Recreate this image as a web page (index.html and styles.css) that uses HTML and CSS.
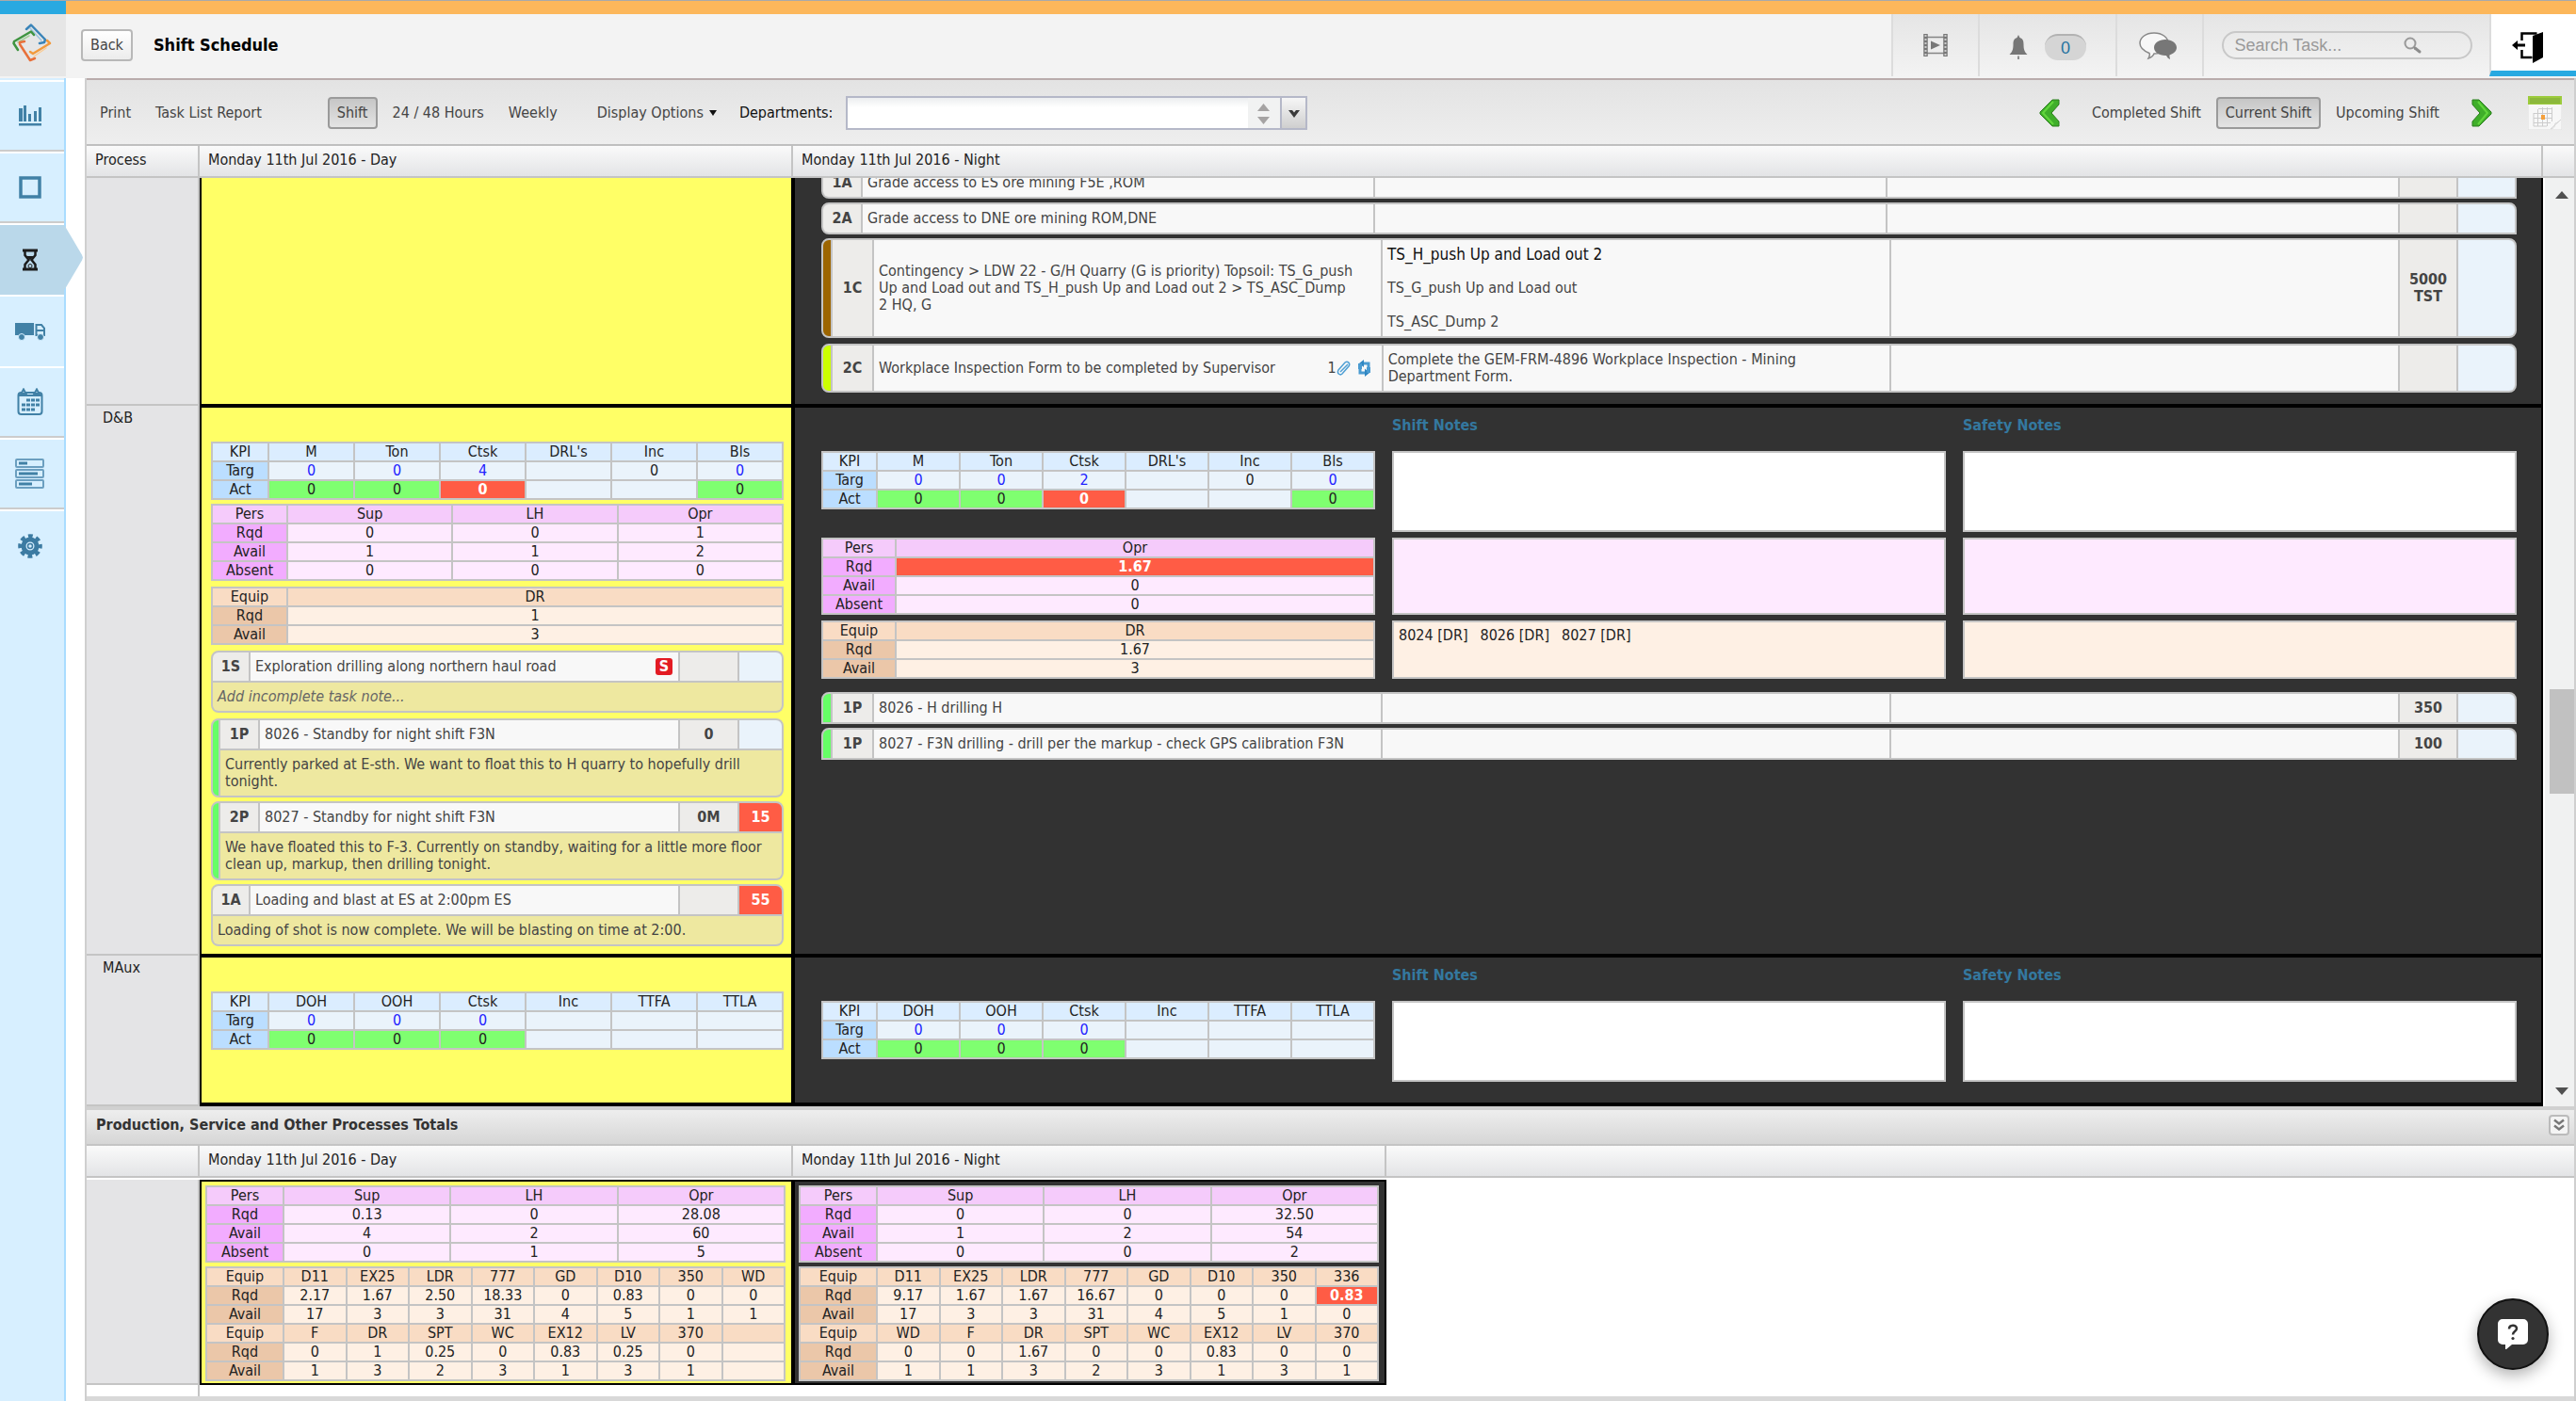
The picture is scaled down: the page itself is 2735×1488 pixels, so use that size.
FILE: index.html
```html
<!DOCTYPE html>
<html lang="en">
<head>
<meta charset="utf-8">
<title>Shift Schedule</title>
<link rel="stylesheet" href="styles.css">
</head>
<body>
<div class="app">
  <div class="brand-strip"><span class="brand-strip-left"></span></div>

  <header class="topbar">
    <a class="logo" href="#" aria-label="Home">
      <svg width="42" height="42" viewBox="0 0 42 42" fill="none" stroke-linejoin="round" stroke-linecap="round">
        <path d="M15 6 L20 1.500 L35 17 L34 20 L29 21" stroke="#3a84b8" stroke-width="2.500"/>
        <path d="M19 5 L31 18" stroke="#9cc4e0" stroke-width="1.500"/>
        <path d="M23 12 L20 8.500 L2 19 L1.500 21 L6 28" stroke="#3f9440" stroke-width="2.500"/>
        <path d="M18 13 L6 20" stroke="#a5cf9b" stroke-width="1.500"/>
        <path d="M37 18 L40 21 L22 32 L19 30" stroke="#f29a3c" stroke-width="2.500"/>
        <path d="M36 26 L23 35" stroke="#f9cc96" stroke-width="1.500"/>
        <path d="M13 19 L8 20 L8 22 L19 39 L24 37" stroke="#e8703a" stroke-width="2.500"/>
      </svg>
    </a>
    <div class="topbar-title">
      <button class="btn btn-light" type="button">Back</button>
      <h1>Shift Schedule</h1>
    </div>
    <div class="topbar-cell cell-film">
      <button class="icon-btn" type="button" aria-label="Video">
        <svg width="26" height="24" viewBox="0 0 26 24"><path d="M4 3.500h18M4 20.500h18" stroke="#858585" stroke-width="1.500"/><path d="M2.500 0v24M23.500 0v24" stroke="#777" stroke-width="4.500"/><path d="M2.500 1v23M23.500 1v23" stroke="#ccc" stroke-width="2" stroke-dasharray="2 2"/><path d="M8 7.500l10 4.500-10 4.500z" fill="#777"/></svg>
      </button>
    </div>
    <div class="topbar-cell cell-bell">
      <button class="icon-btn" type="button" aria-label="Notifications">
        <svg width="20" height="26" viewBox="0 0 20 26" fill="#777"><path d="M10 0l1.500 3c3 1 4 3 4 7 0 5 .8 8 4 11H.5c3.200-3 4-6 4-11 0-4 1-6 4-7z"/><path d="M9.200 22.500h1.600v3.500H9.200z"/></svg>
      </button>
      <span class="badge">0</span>
    </div>
    <div class="topbar-cell cell-chat">
      <button class="icon-btn" type="button" aria-label="Messages">
        <svg width="40" height="30" viewBox="0 0 40 30"><path d="M16 1C7 1 1 6 1 12c0 4 4 8 10 10.500 1 2 0 3.500-1 5.500 3-1 5-2.500 6-5 9 0 15-5 15-11S25 1 16 1z" fill="#f7f7f7" stroke="#888" stroke-width="1.500"/><path d="M28 8c-7 0-12 4-12 8.500S21 25 28 25h1c1 2 2 3 4 4 0-2-1-3-.5-4.500C37 23 40 20 40 16.500 40 12 35 8 28 8z" fill="#777"/></svg>
      </button>
    </div>
    <div class="topbar-cell cell-search">
      <form class="search">
        <input type="text" aria-label="Search Task" placeholder="Search Task...">
        <svg width="24" height="22" viewBox="0 0 24 22" fill="none"><circle cx="8" cy="9" r="5.500" stroke="#999" stroke-width="2"/><path d="M13 14l5 4" stroke="#8c8c8c" stroke-width="3" stroke-linecap="round"/></svg>
      </form>
    </div>
    <button class="exit" type="button" aria-label="Log out">
      <svg width="34" height="34" viewBox="0 0 34 34"><path d="M10.500 10V2.500h16M10.500 20v8h11" fill="none" stroke="#000" stroke-width="2.500"/><path d="M22 5l11-4v27l-11 6z" fill="#000"/><path d="M0 15l6-5v3.500h8v3H6V20z" fill="#000"/></svg>
    </button>
  </header>

  <div class="frame">
    <nav class="sidebar">
      <a class="nav-item ruled" href="#" aria-label="Dashboard"><svg width="26" height="22" viewBox="0 0 26 22" fill="#4181a6"><path d="M1 3h4v14H1zM6 0h3v17H6zM11 9h3v8h-3zM17 6h3v11h-3zM22 2h3v15h-3zM1 19h24v2.500H1z"/></svg></a>
      <a class="nav-item ruled" href="#" aria-label="Board"><svg width="24" height="24" viewBox="0 0 24 24"><path d="M2 2h20v20H2z" fill="none" stroke="#4181a6" stroke-width="3.500"/></svg></a>
      <a class="nav-item active" href="#" aria-label="Shift schedule"><svg width="16" height="24" viewBox="0 0 16 24" fill="none" stroke="#1c1c1c"><path d="M0 2h16M0 22h16" stroke-width="3"/><path d="M2.500 3v4l4 5-4 5v4M13.500 3v4l-4 5 4 5v4" stroke-width="2.500"/><path d="M4 8h8l-4 4z" fill="#1c1c1c" stroke="none"/><circle cx="8" cy="18.500" r="2" stroke-width="1"/></svg></a>
      <a class="nav-item" href="#" aria-label="Fleet"><svg width="32" height="20" viewBox="0 0 32 20" fill="#4181a6"><path d="M0 1h20v13H0z"/><circle cx="7" cy="16" r="3.500" stroke="#d7efff"/><path d="M22.500 3H28l3 3.500V14h-8.500z" fill="none" stroke="#4181a6" stroke-width="2"/><path d="M22 8h9v2h-9z"/><circle cx="27" cy="16" r="3.500" stroke="#d7efff"/></svg></a>
      <a class="nav-item ruled" href="#" aria-label="Calendar"><svg width="28" height="30" viewBox="0 0 28 30"><rect x="1.500" y="5" width="25" height="23" rx="3" fill="none" stroke="#4181a6" stroke-width="2"/><path d="M2 8h24" stroke="#4181a6" stroke-width="2"/><path d="M7 1.500L9.500 6h-5zM21 1.500L23.500 6h-5z" fill="#d7efff" stroke="#4181a6" stroke-width="2"/><path d="M10 13h14M5 18h19M5 23h14" stroke="#4181a6" stroke-width="3" stroke-dasharray="4 1"/></svg></a>
      <a class="nav-item ruled" href="#" aria-label="Resources"><svg width="32" height="34" viewBox="0 0 32 34" fill="none" stroke="#6b9fc0" stroke-width="2"><rect x="1" y="2" width="29" height="8" rx="1"/><rect x="1" y="13" width="29" height="8" rx="1"/><rect x="1" y="24" width="29" height="8" rx="1"/><path d="M4 6h9M4 17h20M4 28h14" stroke="#4181a6" stroke-width="3"/></svg></a>
      <a class="nav-item" href="#" aria-label="Settings"><svg width="26" height="26" viewBox="0 0 26 26"><g fill="none" stroke="#3c7ba2"><circle cx="13" cy="13" r="7" stroke-width="5"/><circle cx="13" cy="13" r="2.500" stroke-width="1.500"/><circle cx="13" cy="13" r="10.800" stroke-width="4" stroke-dasharray="4.800 3.680" stroke-dashoffset="2.400"/></g></svg></a>
    </nav>

    <main class="content">
      <div class="toolbar">
        <div class="group">
          <button class="btn btn-flat" type="button">Print</button>
          <button class="btn btn-flat" type="button">Task List Report</button>
        </div>
        <div class="group group-range">
          <button class="btn btn-on" type="button">Shift</button>
          <button class="btn btn-flat" type="button">24 / 48 Hours</button>
          <button class="btn btn-flat" type="button">Weekly</button>
        </div>
        <button class="btn btn-flat" type="button">Display Options <svg width="8" height="6" viewBox="0 0 8 6"><path d="M0 0h8L4 6z" fill="#111"/></svg></button>
        <div class="departments">
          <label for="departments">Departments:</label>
          <div class="combo">
            <input id="departments" type="text">
            <svg class="stepper" width="34" height="32" viewBox="0 0 34 32"><path d="M0 0h34v32H0z" fill="#f1f2f2"/><path d="M10 14l6.500-8 6.500 8zM10 20l6.500 8 6.500-8z" fill="#a5a3a3"/></svg>
            <button type="button" aria-label="Open departments"><svg width="14" height="9" viewBox="0 0 14 9"><path d="M1 1h4l2 2.500L9 1h4L7 9z" fill="#3a3a3a"/></svg></button>
          </div>
        </div>
        <div class="group group-shift">
          <button class="icon-btn" type="button" aria-label="Previous shift"><svg width="22" height="30" viewBox="0 0 22 30"><path d="M14 1h7v5l-8 9 8 9v5h-7L1 16v-2z" fill="#3fae2a" stroke="#2a7f1c"/><path d="M15 3L4 15l11 12" fill="none" stroke="#62d63c" stroke-width="2"/></svg></button>
          <div class="group">
            <button class="btn btn-flat" type="button">Completed Shift</button>
            <button class="btn btn-on" type="button">Current Shift</button>
            <button class="btn btn-flat" type="button">Upcoming Shift</button>
          </div>
          <button class="icon-btn" type="button" aria-label="Next shift"><svg width="22" height="30" viewBox="0 0 22 30"><path d="M8 1H1v5l8 9-8 9v5h7l13-13v-2z" fill="#3fae2a" stroke="#2a7f1c"/><path d="M7 3l10 12L7 27" fill="none" stroke="#62d63c" stroke-width="2"/></svg></button>
          <button class="icon-btn pick-date" type="button" aria-label="Pick a date"><svg width="36" height="36" viewBox="0 0 36 36"><path d="M0 8h36v28H0z" fill="#f7f7f7" stroke="#ddd"/><path d="M0 0h36v9H0z" fill="#9ccb3b"/><path d="M2 2h32v6H2z" fill="#8cb83c"/><path d="M11 13.500h14M6 18.500h20M6 23.500h20M6 28.500h18M6 18v14h14M10.500 14v18M15.500 12v20M20.500 12v20M25.500 12v15" fill="none" stroke="#ccc"/><path d="M14 20h4v5h-4z" fill="#f5a03c"/><path d="M24 35c5-1 4-4 5-6 2 0 4-2 6-4z" fill="#fff" stroke="#d5d5d5"/></svg></button>
        </div>
      </div>

      <div class="schedule-head">
        <span>Process</span><span>Monday 11th Jul 2016 - Day</span><span>Monday 11th Jul 2016 - Night</span><span></span>
      </div>

      <div class="viewport">
        <div class="rows">
          <section class="row">
            <div class="process"></div>
            <div class="day"></div>
            <div class="night">
              <div class="tasks">
                <article class="task square"><div class="line"><b class="tag">1A</b><div class="text">Grade access to ES ore mining F5E ,ROM</div><div class="text"></div><div class="text"></div><b class="value"></b><b class="actual"></b></div></article>
                <article class="task square"><div class="line"><b class="tag">2A</b><div class="text">Grade access to DNE ore mining ROM,DNE</div><div class="text"></div><div class="text"></div><b class="value"></b><b class="actual"></b></div></article>
                <article class="task barred brown"><div class="line tall"><b class="tag">1C</b><div class="text">Contingency &gt; LDW 22 - G/H Quarry (G is priority) Topsoil: TS_G_push<br>Up and Load out and TS_H_push Up and Load out 2 &gt; TS_ASC_Dump<br>2 HQ, G</div><div class="text steps"><p class="lead">TS_H_push Up and Load out 2</p><p>TS_G_push Up and Load out</p><p>TS_ASC_Dump 2</p></div><div class="text"></div><b class="value">5000<br>TST</b><b class="actual"></b></div></article>
                <article class="task barred lime spaced"><div class="line two"><b class="tag">2C</b><div class="text with-icons"><span>Workplace Inspection Form to be completed by Supervisor</span><span class="marks">1<svg width="16" height="16" viewBox="0 0 16 16" fill="none"><path d="M4 12L12 4M2 10l7-8c3-2 6 1 4 4l-7 8c-2 2-6 0-4-4z" stroke="#4f9fd4" stroke-width="1.500"/></svg><svg class="repeat" width="15" height="18" viewBox="0 0 15 18" fill="none"><path d="M3 8v6h6M12 10V4H6" stroke="#4a9bd1" stroke-width="3"/><path d="M8 9.500l5 4.500-5 4zM7 0v8L2 4z" fill="#2f86c2"/><path d="M1 4h4v6H1zM10 8h4v6h-4z" fill="#4a9bd1"/></svg></span></div><div class="text">Complete the GEM-FRM-4896 Workplace Inspection - Mining<br>Department Form.</div><div class="text"></div><b class="value"></b><b class="actual"></b></div></article>
              </div>
            </div>
          </section>

          <section class="row">
            <div class="process">D&amp;B</div>
            <div class="day padded">
              <table class="kpi">
                <tr><th>KPI</th><th>M</th><th>Ton</th><th>Ctsk</th><th>DRL's</th><th>Inc</th><th>Bls</th></tr>
                <tr class="targ"><th>Targ</th><td>0</td><td>0</td><td>4</td><td></td><td class="plain">0</td><td>0</td></tr>
                <tr><th>Act</th><td class="ok">0</td><td class="ok">0</td><td class="bad">0</td><td></td><td></td><td class="ok">0</td></tr>
              </table>
              <table class="pers">
                <tr><th>Pers</th><th>Sup</th><th>LH</th><th>Opr</th></tr>
                <tr><th>Rqd</th><td>0</td><td>0</td><td>1</td></tr>
                <tr><th>Avail</th><td>1</td><td>1</td><td>2</td></tr>
                <tr><th>Absent</th><td>0</td><td>0</td><td>0</td></tr>
              </table>
              <table class="equip spaced">
                <tr><th>Equip</th><th>DR</th></tr>
                <tr><th>Rqd</th><td>1</td></tr>
                <tr><th>Avail</th><td>3</td></tr>
              </table>
              <article class="task spaced"><div class="line"><b class="tag">1S</b><div class="text with-icons"><span>Exploration drilling along northern haul road</span><b class="stop">S</b></div><b class="value"></b><b class="actual"></b></div><p class="note empty">Add incomplete task note...</p></article>
              <article class="task barred green spaced"><div class="line"><b class="tag">1P</b><div class="text">8026 - Standby for night shift F3N</div><b class="value">0</b><b class="actual"></b></div><p class="note">Currently parked at E-sth. We want to float this to H quarry to hopefully drill<br>tonight.</p></article>
              <article class="task barred green"><div class="line"><b class="tag">2P</b><div class="text">8027 - Standby for night shift F3N</div><b class="value">0M</b><b class="actual bad">15</b></div><p class="note">We have floated this to F-3. Currently on standby, waiting for a little more floor<br>clean up, markup, then drilling tonight.</p></article>
              <article class="task"><div class="line"><b class="tag">1A</b><div class="text">Loading and blast at ES at 2:00pm ES</div><b class="value"></b><b class="actual bad">55</b></div><p class="note">Loading of shot is now complete. We will be blasting on time at 2:00.</p></article>
            </div>
            <div class="night">
              <div class="notes-grid">
                <span></span><h2>Shift Notes</h2><h2>Safety Notes</h2>
                <table class="kpi">
                  <tr><th>KPI</th><th>M</th><th>Ton</th><th>Ctsk</th><th>DRL's</th><th>Inc</th><th>Bls</th></tr>
                  <tr class="targ"><th>Targ</th><td>0</td><td>0</td><td>2</td><td></td><td class="plain">0</td><td>0</td></tr>
                  <tr><th>Act</th><td class="ok">0</td><td class="ok">0</td><td class="bad">0</td><td></td><td></td><td class="ok">0</td></tr>
                </table>
                <div class="box general"></div><div class="box general"></div>
                <table class="pers">
                  <tr><th>Pers</th><th>Opr</th></tr>
                  <tr><th>Rqd</th><td class="bad">1.67</td></tr>
                  <tr><th>Avail</th><td>0</td></tr>
                  <tr><th>Absent</th><td>0</td></tr>
                </table>
                <div class="box people"></div><div class="box people"></div>
                <table class="equip">
                  <tr><th>Equip</th><th>DR</th></tr>
                  <tr><th>Rqd</th><td>1.67</td></tr>
                  <tr><th>Avail</th><td>3</td></tr>
                </table>
                <div class="box machines"><span>8024 [DR]</span><span>8026 [DR]</span><span>8027 [DR]</span></div><div class="box machines"></div>
              </div>
              <div class="tasks below">
                <article class="task barred green flat"><div class="line"><b class="tag">1P</b><div class="text">8026 - H drilling H</div><div class="text"></div><div class="text"></div><b class="value">350</b><b class="actual"></b></div></article>
                <article class="task barred green flat"><div class="line"><b class="tag">1P</b><div class="text">8027 - F3N drilling - drill per the markup - check GPS calibration F3N</div><div class="text"></div><div class="text"></div><b class="value">100</b><b class="actual"></b></div></article>
              </div>
            </div>
          </section>

          <section class="row last">
            <div class="process">MAux</div>
            <div class="day padded">
              <table class="kpi">
                <tr><th>KPI</th><th>DOH</th><th>OOH</th><th>Ctsk</th><th>Inc</th><th>TTFA</th><th>TTLA</th></tr>
                <tr class="targ"><th>Targ</th><td>0</td><td>0</td><td>0</td><td></td><td></td><td></td></tr>
                <tr><th>Act</th><td class="ok">0</td><td class="ok">0</td><td class="ok">0</td><td></td><td></td><td></td></tr>
              </table>
            </div>
            <div class="night">
              <div class="notes-grid">
                <span></span><h2>Shift Notes</h2><h2>Safety Notes</h2>
                <table class="kpi">
                  <tr><th>KPI</th><th>DOH</th><th>OOH</th><th>Ctsk</th><th>Inc</th><th>TTFA</th><th>TTLA</th></tr>
                  <tr class="targ"><th>Targ</th><td>0</td><td>0</td><td>0</td><td></td><td></td><td></td></tr>
                  <tr><th>Act</th><td class="ok">0</td><td class="ok">0</td><td class="ok">0</td><td></td><td></td><td></td></tr>
                </table>
                <div class="box general"></div><div class="box general"></div>
              </div>
            </div>
          </section>
        </div>
        <div class="scrollbar">
          <svg width="14" height="8" viewBox="0 0 14 8"><path d="M0 8h14L7 0z" fill="#505050"/></svg>
          <div class="track"><div class="thumb"></div></div>
          <svg width="14" height="8" viewBox="0 0 14 8"><path d="M0 0h14L7 8z" fill="#505050"/></svg>
        </div>
      </div>

      <section class="totals">
        <div class="totals-title">
          <h2>Production, Service and Other Processes Totals</h2>
          <button type="button" aria-label="Collapse totals"><svg width="12" height="14" viewBox="0 0 12 14" fill="none" stroke="#777" stroke-width="2.500"><path d="M1 1.500l5 4 5-4M1 7.500l5 4 5-4"/></svg></button>
        </div>
        <div class="totals-head"><span></span><span>Monday 11th Jul 2016 - Day</span><span>Monday 11th Jul 2016 - Night</span><span></span></div>
        <div class="totals-row">
          <div class="process-gutter"><div class="process"></div></div>
          <div class="day">
            <table class="pers">
              <tr><th>Pers</th><th>Sup</th><th>LH</th><th>Opr</th></tr>
              <tr><th>Rqd</th><td>0.13</td><td>0</td><td>28.08</td></tr>
              <tr><th>Avail</th><td>4</td><td>2</td><td>60</td></tr>
              <tr><th>Absent</th><td>0</td><td>1</td><td>5</td></tr>
            </table>
            <table class="equip">
              <tr><th>Equip</th><th>D11</th><th>EX25</th><th>LDR</th><th>777</th><th>GD</th><th>D10</th><th>350</th><th>WD</th></tr>
              <tr><th>Rqd</th><td>2.17</td><td>1.67</td><td>2.50</td><td>18.33</td><td>0</td><td>0.83</td><td>0</td><td>0</td></tr>
              <tr><th>Avail</th><td>17</td><td>3</td><td>3</td><td>31</td><td>4</td><td>5</td><td>1</td><td>1</td></tr>
              <tr class="head"><th>Equip</th><th>F</th><th>DR</th><th>SPT</th><th>WC</th><th>EX12</th><th>LV</th><th>370</th><th></th></tr>
              <tr><th>Rqd</th><td>0</td><td>1</td><td>0.25</td><td>0</td><td>0.83</td><td>0.25</td><td>0</td><td></td></tr>
              <tr><th>Avail</th><td>1</td><td>3</td><td>2</td><td>3</td><td>1</td><td>3</td><td>1</td><td></td></tr>
            </table>
          </div>
          <div class="night">
            <table class="pers">
              <tr><th>Pers</th><th>Sup</th><th>LH</th><th>Opr</th></tr>
              <tr><th>Rqd</th><td>0</td><td>0</td><td>32.50</td></tr>
              <tr><th>Avail</th><td>1</td><td>2</td><td>54</td></tr>
              <tr><th>Absent</th><td>0</td><td>0</td><td>2</td></tr>
            </table>
            <table class="equip">
              <tr><th>Equip</th><th>D11</th><th>EX25</th><th>LDR</th><th>777</th><th>GD</th><th>D10</th><th>350</th><th>336</th></tr>
              <tr><th>Rqd</th><td>9.17</td><td>1.67</td><td>1.67</td><td>16.67</td><td>0</td><td>0</td><td>0</td><td class="bad">0.83</td></tr>
              <tr><th>Avail</th><td>17</td><td>3</td><td>3</td><td>31</td><td>4</td><td>5</td><td>1</td><td>0</td></tr>
              <tr class="head"><th>Equip</th><th>WD</th><th>F</th><th>DR</th><th>SPT</th><th>WC</th><th>EX12</th><th>LV</th><th>370</th></tr>
              <tr><th>Rqd</th><td>0</td><td>0</td><td>1.67</td><td>0</td><td>0</td><td>0.83</td><td>0</td><td>0</td></tr>
              <tr><th>Avail</th><td>1</td><td>1</td><td>3</td><td>2</td><td>3</td><td>1</td><td>3</td><td>1</td></tr>
            </table>
          </div>
        </div>
      </section>
    </main>
  </div>

  <button class="help" type="button" aria-label="Help">
    <svg width="32" height="32" viewBox="0 0 32 32"><path d="M5 0h22a5 5 0 0 1 5 5v17a5 5 0 0 1-5 5H15l-6 5h-1v-5H5a5 5 0 0 1-5-5V5a5 5 0 0 1 5-5z" fill="#fff"/><path d="M12 10.500c0-5 8-5 8-.5 0 3.200-4 3-4 6.500" fill="none" stroke="#333" stroke-width="2.500"/><circle cx="16" cy="20.500" r="1.600" fill="#333"/></svg>
  </button>
</div>
</body>
</html>
```
FILE: styles.css
```css
:root {
  --line: #c4c4c4;
  --ink: #444;
  --sky: #29a9e1;
  --yellow: #ffff66;
  --dark: #323232;
  --red: #ff5c45;
}

* { box-sizing: border-box; }

body {
  margin: 0;
  background: #fff;
  color: #222;
  font-family: "DejaVu Sans Condensed", "DejaVu Sans", sans-serif;
  font-size: 16px;
  line-height: 18px;
}

h1, h2, p { margin: 0; }
button, input { font: inherit; color: inherit; margin: 0; }
svg { display: block; flex: none; }

.app {
  display: flex;
  flex-direction: column;
  min-height: 100vh;
}

/* Top bar */
.brand-strip {
  height: 15px;
  border-top: 1px solid #a9a9a9;
  background: #fcb75b;
}
.brand-strip-left {
  display: block;
  width: 70px;
  height: 100%;
  background: var(--sky);
}
.topbar {
  display: flex;
  height: 68px;
  padding-bottom: 2px;
  background: #f3f3f3;
}
.logo {
  width: 70px;
  padding: 10px 13px;
  background: #e6e6e6;
}
.topbar-title {
  flex: 1;
  display: flex;
  align-items: center;
  gap: 22px;
  padding-left: 16px;
}
.topbar-title h1 {
  color: #000;
  font-size: 18px;
  font-weight: bold;
}
.topbar-cell {
  display: flex;
  align-items: center;
  justify-content: center;
  gap: 18px;
  border-left: 2px solid #dcdcdc;
  background: linear-gradient(#e5e5e5, #f3f3f3);
}
.cell-film, .cell-chat { width: 92px; }
.cell-chat { padding: 2px 4px 0 0; }
.cell-bell { width: 146px; padding-top: 4px; }
.cell-search { width: 305px; }
.icon-btn {
  padding: 0;
  border: 0;
  background: none;
}
.badge {
  width: 44px;
  height: 28px;
  border-top: 2px solid #b2b2b2;
  border-radius: 14px;
  background: #d5d5d5;
  color: #2572a0;
  font: 18px/26px "Liberation Sans", sans-serif;
  text-align: center;
}
.search {
  display: flex;
  align-items: center;
  width: 266px;
  height: 30px;
  padding: 0 48px 0 12px;
  border: 2px solid #c8c8c8;
  border-radius: 15px;
}
.search input {
  flex: 1;
  min-width: 0;
  padding: 0;
  border: 0;
  background: none;
  font: 18px "Liberation Sans", sans-serif;
}
.search input::placeholder { color: #999; opacity: 1; }
.exit {
  width: 92px;
  padding: 10px 34px 0 22px;
  border: 0;
  border-left: 2px solid #dcdcdc;
  border-bottom: 6px solid var(--sky);
  background: #fff;
}

/* Side navigation */
.frame {
  flex: 1;
  display: flex;
  align-items: stretch;
}
.sidebar {
  flex: none;
  width: 70px;
  padding-top: 2px;
  border-right: 2px solid #aadcff;
  background: #d7efff;
}
.nav-item {
  position: relative;
  display: flex;
  align-items: center;
  justify-content: center;
  height: 76px;
  padding-right: 4px;
  border-top: 2px solid #fff;
}
.nav-item.ruled { border-bottom: 2px solid #ccc; }
.nav-item.active { background: #bad8ea; }
.nav-item.active::after {
  content: "";
  position: absolute;
  left: 68px;
  top: 0;
  width: 20px;
  height: 72px;
  background: #bad8ea;
  clip-path: polygon(0 0, 10% 4%, 95% 44%, 100% 48%, 95% 52%, 10% 92%, 0 96%);
}

/* Toolbar */
.content {
  flex: 1;
  min-width: 0;
  display: flex;
  flex-direction: column;
  margin-left: 20px;
  border-left: 2px solid #cfcfcf;
  border-right: 2px solid #cfcfcf;
}
.toolbar {
  display: flex;
  align-items: center;
  height: 72px;
  padding: 2px 13px 0 4px;
  border-top: 2px solid #b9acac;
  border-bottom: 2px solid #bfbfbf;
  background: linear-gradient(#e3e3e3, #eee);
}
.group {
  display: flex;
  align-items: center;
  gap: 6px;
}
.group-range { margin: 0 22px 0 60px; }
.group-shift { gap: 24px; margin-left: auto; }
.pick-date { margin-left: 14px; }
.btn {
  display: flex;
  align-items: center;
  gap: 6px;
  height: 34px;
  padding: 0 8px;
  border: 2px solid transparent;
  border-radius: 4px;
  background: none;
  color: var(--ink);
  white-space: nowrap;
}
.btn-light {
  border-color: #b8b8b8;
  background: linear-gradient(#fff, #ececec);
}
.btn-on {
  border-color: #9a9a9a;
  background: linear-gradient(#c6c6c6, #e4e4e4);
}
.departments {
  display: flex;
  align-items: center;
  gap: 14px;
  margin-left: 14px;
  color: #111;
}
.combo {
  display: flex;
  width: 490px;
  height: 36px;
  border: 2px solid #b5b8c8;
  background: #fff;
}
.combo input {
  flex: 1;
  min-width: 0;
  border: 0;
  background: linear-gradient(#eceef0, #fff 10px);
}
.combo button {
  display: flex;
  align-items: center;
  justify-content: center;
  width: 27px;
  padding: 0;
  border: 0;
  border-left: 2px solid #b5b8c8;
  background: linear-gradient(#f6f6f6, #cfcfcf);
}

/* Schedule */
.schedule-head, .totals-head {
  display: grid;
  grid-template-columns: 120px 630fr 1858fr 33px;
  height: 34px;
  border-bottom: 2px solid var(--line);
  background: linear-gradient(#fafafa, #e3e4e6);
}
.schedule-head span, .totals-head span {
  padding: 6px 9px;
  border-right: 2px solid var(--line);
}
.schedule-head span:last-child, .totals-head span:last-child { border-right: 0; }
.viewport {
  display: flex;
  overflow: hidden;
}
/* The list is scrolled part-way through its first visible task. */
.rows {
  flex: 1;
  margin-top: -14px;
}
.row {
  display: grid;
  grid-template-columns: 120px 630fr 1858fr;
}
.process {
  padding: 4px 17px;
  border-right: 2px solid var(--line);
  border-bottom: 2px solid var(--line);
  background: #e4e4e6;
}
.day, .night { border: 2px solid #000; }
.last .day, .last .night { border-bottom-width: 4px; }
.day { background: var(--yellow); }
.night { background: var(--dark); }
.row .night { padding: 0 26px 12px 28px; }
.day.padded {
  display: flex;
  flex-direction: column;
  gap: 4px;
  padding: 36px 8px 8px 10px;
}
.spaced { margin-top: 2px; }

.notes-grid {
  display: grid;
  grid-template-columns: repeat(3, 1fr);
  align-items: start;
  gap: 6px 18px;
  padding-bottom: 2px;
}
.notes-grid h2 {
  height: 40px;
  padding-top: 10px;
  color: #34789f;
  font-size: 16px;
}
.last .notes-grid { padding-bottom: 10px; }
.box {
  display: flex;
  gap: 13px;
  padding: 5px;
  border: 2px solid var(--line);
}
.general { height: 86px; background: #fff; }
.people { height: 82px; background: #feeaff; }
.machines { height: 62px; background: #fef0e4; }

/* Figures tables: the gaps between the cells show as grid lines */
table {
  width: 100%;
  border-spacing: 2px;
  table-layout: fixed;
  background: var(--line);
}
th, td {
  height: 18px;
  padding: 0;
  font-weight: normal;
  text-align: center;
}
.kpi th { background: #bbdeff; }
.kpi tr:first-child th { background: #dbedff; }
.kpi td { background: #eaf3fb; }
.kpi .targ td { color: #22f; }
.kpi .targ .plain { color: #222; }
.pers th { background: #f2acff; }
.pers tr:first-child th { background: #f5cbfb; }
.pers td { background: #feeaff; }
.equip th { background: #ebc7a9; }
.equip tr:first-child th, .equip .head th { background: #f9dcc4; }
.equip td { background: #fef0e4; }
.kpi .ok { background: #7fff70; }
.kpi td.bad, .pers td.bad, .equip td.bad {
  background: var(--red);
  color: #fff;
  font-weight: bold;
}
.day .kpi th:first-child { width: 58px; }
.night .kpi th:first-child { width: 56px; }
.day th:first-child { width: 78px; }
.night th:first-child { width: 76px; }
.totals th:first-child { width: 80px; }

/* Tasks */
.tasks {
  display: flex;
  flex-direction: column;
  gap: 4px;
}
.below { padding-top: 12px; }
.task {
  display: flex;
  flex-direction: column;
  gap: 2px;
  border: 2px solid var(--line);
  border-radius: 8px;
  overflow: hidden;
  background: var(--line);
  color: var(--ink);
}
.square { border-bottom-right-radius: 0; }
.flat { border-bottom-left-radius: 0; border-bottom-right-radius: 0; }
.barred { padding-left: 8px; }
.night .barred { padding-left: 10px; }
.green { background: linear-gradient(to right, #66ff66 6px, var(--line) 6px); }
.night .green { background: linear-gradient(to right, #66ff66 8px, var(--line) 8px); }
.brown { background: linear-gradient(to right, #9c6500 8px, var(--line) 8px); }
.lime { background: linear-gradient(to right, #ccff00 8px, var(--line) 8px); }
.line {
  display: flex;
  gap: 2px;
  min-height: 30px;
}
.line.tall { min-height: 102px; }
.line.two { min-height: 48px; }
.line > * {
  display: flex;
  align-items: center;
}
.tag, .value, .actual {
  flex: none;
  justify-content: center;
  text-align: center;
}
.tag { width: 38px; background: #edecea; }
.barred .tag, .night .tag { width: 40px; }
.night .barred .tag { width: 42px; }
.text {
  flex: 1 1 0;
  min-width: 0;
  padding: 0 5px;
  background: #f8f8f8;
}
.value { width: 61px; background: #edecea; }
.actual { width: 45px; background: #eaf3fb; }
.night .value, .night .actual { width: 60px; }
.actual.bad { background: var(--red); color: #fff; }
.text.with-icons { justify-content: space-between; padding-right: 6px; }
.marks { display: flex; align-items: center; padding-right: 5px; }
.repeat { margin-left: 6px; }
.text.steps {
  flex-direction: column;
  align-items: flex-start;
  justify-content: center;
  gap: 18px;
}
.steps .lead { color: #111; font-size: 17px; }
.stop {
  width: 18px;
  border-radius: 3px;
  background: #e31b23;
  color: #fff;
  text-align: center;
}
.note {
  padding: 6px 5px;
  background: #eee8a0;
}
.note.empty { color: #666; font-style: italic; }

/* Scroll bar */
.scrollbar {
  flex: none;
  display: flex;
  flex-direction: column;
  align-items: center;
  width: 33px;
  padding: 14px 0 12px 4px;
  border-left: 2px solid #fff;
  background: #f0f1f1;
}
.track {
  flex: 1;
  display: flex;
  flex-direction: column;
  justify-content: flex-end;
  width: 26px;
  padding-bottom: 312px;
}
.thumb { height: 111px; background: #c1c1c1; }

/* Totals */
.totals {
  flex: 1;
  display: flex;
  flex-direction: column;
  border-top: 4px solid #d0d0d0;
  border-bottom: 5px solid #d8d8d8;
}
.totals-title {
  display: flex;
  align-items: center;
  justify-content: space-between;
  height: 38px;
  padding: 0 5px 4px 10px;
  border-bottom: 2px solid var(--line);
  background: linear-gradient(#eee, #d6d6d6);
}
.totals-title h2 { color: #333; font-size: 16px; }
.totals-title button {
  display: flex;
  align-items: center;
  justify-content: center;
  width: 22px;
  height: 22px;
  padding: 0;
  border: 2px solid #bbb;
  border-radius: 4px;
  background: #f4f4f4;
}
.totals-head, .totals-row {
  grid-template-columns: 120px 630fr 630fr 1261fr;
}
.totals-row {
  flex: 1;
  display: grid;
  align-items: start;
  padding-top: 2px;
}
.process-gutter { height: 100%; border-right: 2px solid var(--line); }
.process-gutter .process { height: 218px; border-right: 0; }
.totals .day, .totals .night {
  display: flex;
  flex-direction: column;
  gap: 4px;
  padding: 4px 6px 2px 4px;
}

/* Help */
.help {
  position: fixed;
  right: 29px;
  bottom: 33px;
  display: flex;
  align-items: center;
  justify-content: center;
  width: 76px;
  height: 76px;
  padding: 0;
  border: 2px solid #111;
  border-radius: 50%;
  background: #333;
  box-shadow: 0 6px 16px rgba(0, 0, 0, 0.3);
}
```
